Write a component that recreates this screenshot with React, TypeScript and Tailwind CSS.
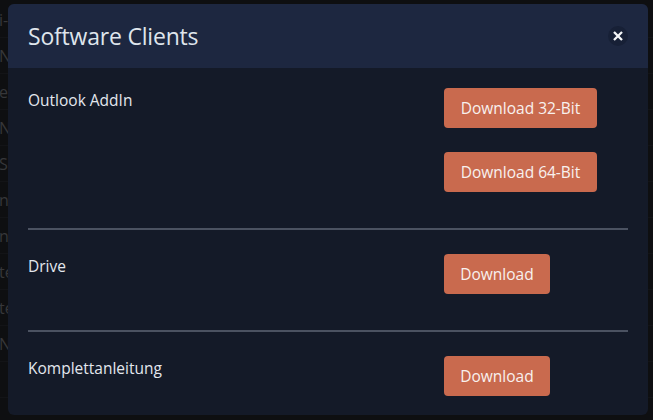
import React from "react";

const bgRows = ["i-", "N.", "e", "N.", "Se", "n", "n", "te", "te", "N.", "", ""];

function Btn({ label, w }: { label: string; w: string }) {
  return (
    <button
      className={`h-[40px] ${w} rounded-[4px] bg-[#c96a4e] text-[15.5px] leading-[24px] text-[#f8f1ee] flex items-center justify-center`}
    >
      {label}
    </button>
  );
}

export default function App() {
  return (
    <div
      className="relative w-[653px] h-[420px] bg-[#0e0f11] overflow-hidden"
      style={{ fontFamily: '"Open Sans", "Noto Sans", sans-serif' }}
    >
      {/* background content behind overlay */}
      <div className="flex flex-col pt-[2px]">
        {bgRows.map((t, i) => (
          <div
            key={i}
            className="h-[36px] flex items-center pl-0 text-[16px] text-[#36373a] border-b border-[#131417] -ml-[1px]"
          >
            {t}
          </div>
        ))}
      </div>

      {/* modal */}
      <div className="absolute left-[8px] top-[4px] w-[640px] h-[411px] rounded-[6px] overflow-hidden bg-[#141a28] flex flex-col">
        <div className="h-[64px] bg-[#1d2740] flex items-center justify-between pl-[20px] pr-[20px]">
          <div className="text-[23px] leading-[30px] text-[#dfe5ec] tracking-[-0.2px]">Software Clients</div>
          <div className="w-[20px] h-[20px] rounded-full bg-[#172036] flex items-center justify-center">
            <svg width="10" height="10" viewBox="0 0 10 10">
              <path d="M1.8 1.8 L8.2 8.2 M8.2 1.8 L1.8 8.2" stroke="#f4f6f8" strokeWidth="2.3" strokeLinecap="square" />
            </svg>
          </div>
        </div>

        <div className="px-[20px] flex flex-col">
          <div className="flex pt-[20px] pb-[36px]">
            <div className="w-[416px] text-[15.5px] leading-[24px] text-[#e3e7ee]">Outlook AddIn</div>
            <div className="flex flex-col gap-[24px]">
              <Btn label="Download 32-Bit" w="w-[153px]" />
              <Btn label="Download 64-Bit" w="w-[153px]" />
            </div>
          </div>
          <div className="h-[2px] bg-[#4b5261]" />
          <div className="flex pt-[24px] pb-[36px]">
            <div className="w-[416px] text-[15.5px] leading-[24px] text-[#e3e7ee]">Drive</div>
            <Btn label="Download" w="w-[106px]" />
          </div>
          <div className="h-[2px] bg-[#4b5261]" />
          <div className="flex pt-[24px]">
            <div className="w-[416px] text-[15.5px] leading-[24px] text-[#e3e7ee]">Komplettanleitung</div>
            <Btn label="Download" w="w-[106px]" />
          </div>
        </div>
      </div>
    </div>
  );
}
